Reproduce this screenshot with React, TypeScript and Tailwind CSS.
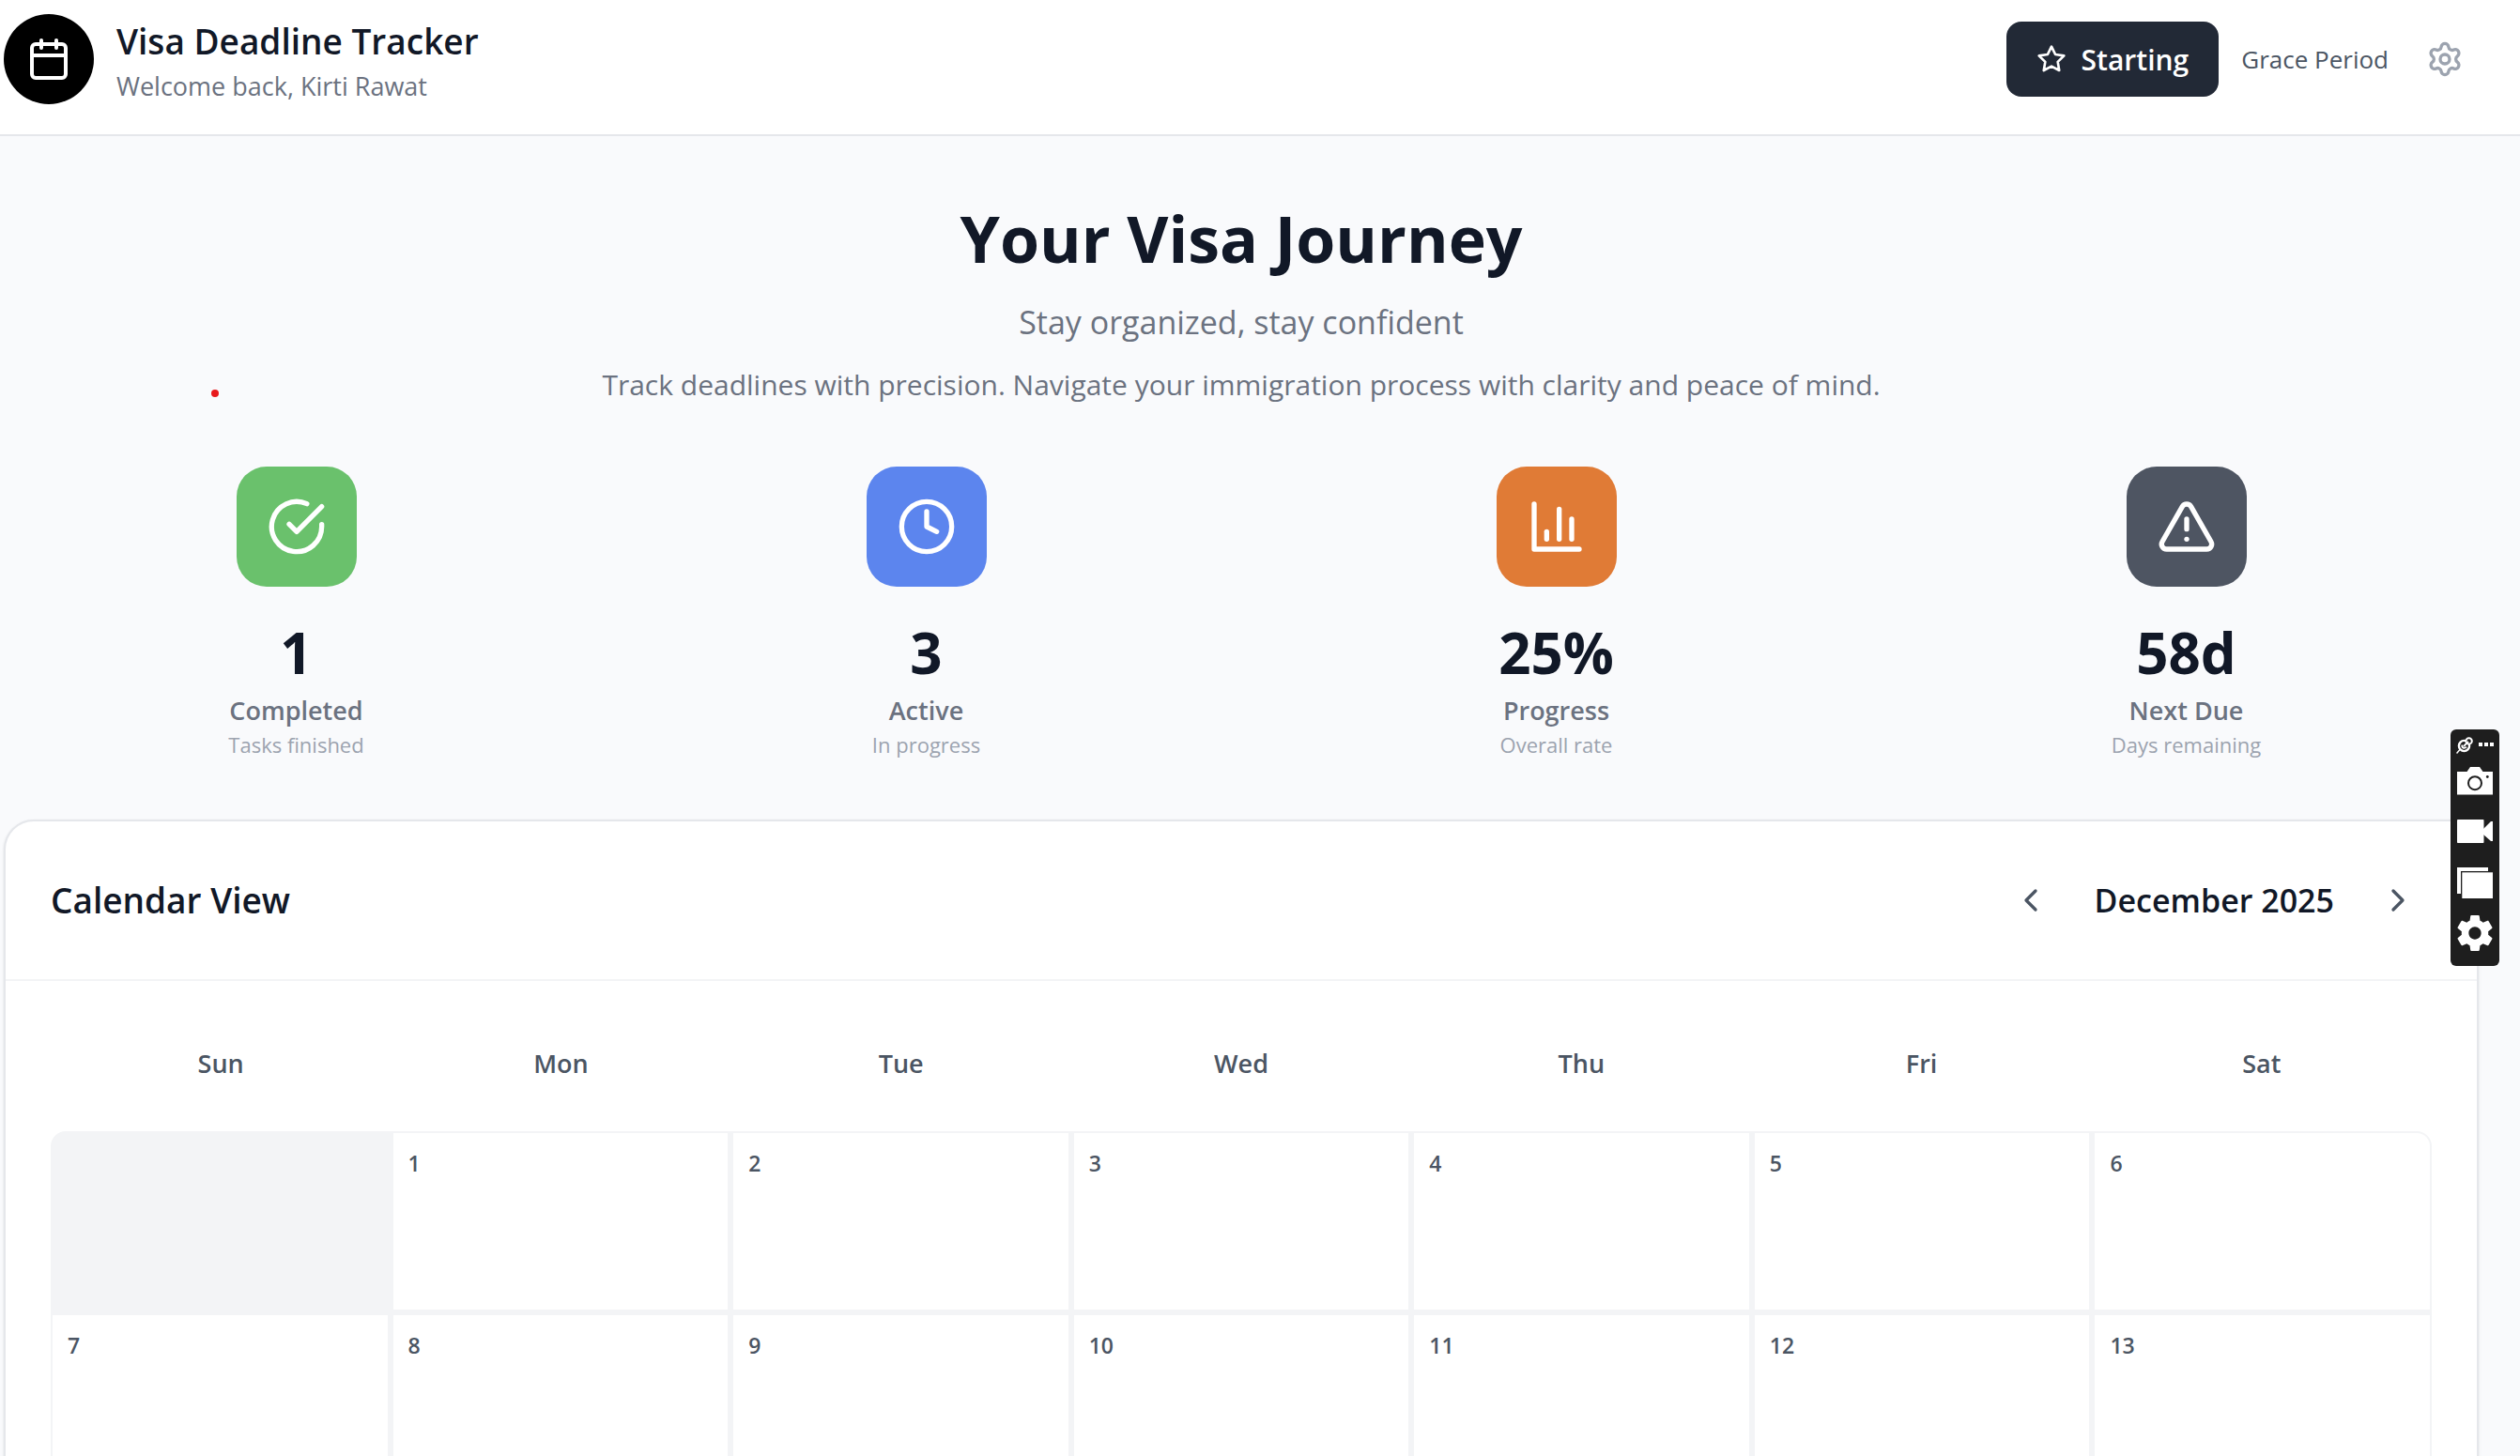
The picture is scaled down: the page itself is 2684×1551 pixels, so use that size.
import type { ReactNode } from "react";
import { Calendar, ChevronLeft, ChevronRight, Clock, Settings, TriangleAlert } from "lucide-react";

function StarIcon() {
  return (
    <svg className="size-8" viewBox="0 0 24 24" fill="none" stroke="currentColor" strokeWidth="2" strokeLinecap="round" strokeLinejoin="round" aria-hidden="true">
      <polygon points="12 2 15.09 8.26 22 9.27 17 14.14 18.18 21.02 12 17.77 5.82 21.02 7 14.14 2 9.27 8.91 8.26 12 2" />
    </svg>
  );
}

function CheckIcon() {
  return (
    <svg className="size-16" viewBox="0 0 24 24" fill="none" stroke="currentColor" strokeWidth="2" strokeLinecap="round" strokeLinejoin="round" aria-hidden="true">
      <path d="M22 11.08V12a10 10 0 1 1-5.93-9.14" />
      <path d="m9 11 3 3L22 4" />
    </svg>
  );
}

function BarsIcon() {
  return (
    <svg className="size-16" viewBox="0 0 24 24" fill="none" stroke="currentColor" strokeWidth="2" strokeLinecap="round" strokeLinejoin="round" aria-hidden="true">
      <path d="M3 3v18h18" />
      <path d="M18 17V9" />
      <path d="M13 17V5" />
      <path d="M8 17v-3" />
    </svg>
  );
}

type Stat = { icon: ReactNode; color: string; value: string; label: string; note: string };

const stats: Stat[] = [
  { icon: <CheckIcon />, color: "bg-[#6ac16c]", value: "1", label: "Completed", note: "Tasks finished" },
  { icon: <Clock className="size-16" />, color: "bg-[#5c85ee]", value: "3", label: "Active", note: "In progress" },
  { icon: <BarsIcon />, color: "bg-[#e07b36]", value: "25%", label: "Progress", note: "Overall rate" },
  { icon: <TriangleAlert className="size-16" />, color: "bg-[#4e5562]", value: "58d", label: "Next Due", note: "Days remaining" },
];

const weekdays = ["Sun", "Mon", "Tue", "Wed", "Thu", "Fri", "Sat"];
const days: (number | null)[] = [null, 1, 2, 3, 4, 5, 6, 7, 8, 9, 10, 11, 12, 13];

function Header() {
  return (
    <header className="flex shrink-0 items-center justify-between border-b-2 border-[#e5e7eb] bg-white pt-[15px] pr-11 pb-8 pl-1">
      <div className="flex items-center gap-6">
        <div className="flex size-24 items-center justify-center rounded-full bg-black text-white">
          <Calendar className="size-12" />
        </div>
        <div>
          <div className="text-[37px] leading-[58px] font-semibold text-[#111827]">Visa Deadline Tracker</div>
          <p className="text-[27px] leading-[38px] text-[#6b7280]">Welcome back, Kirti Rawat</p>
        </div>
      </div>
      <div className="flex items-center gap-6">
        <button type="button" className="flex h-20 items-center gap-4 rounded-2xl bg-[#222936] px-8 text-[30px] font-semibold text-white">
          <StarIcon />
          Starting
        </button>
        <span className="text-[26px] leading-10 text-[#4b5563]">Grace Period</span>
        <button type="button" aria-label="Settings" className="p-4 text-[#9ca3af]">
          <Settings className="size-10" />
        </button>
      </div>
    </header>
  );
}

function Hero() {
  return (
    <section className="text-center">
      <h1 className="text-[68px] leading-[90px] font-bold text-[#111827]">Your Visa Journey</h1>
      <p className="mt-4 text-[34px] leading-[56px] text-[#6b7280]">Stay organized, stay confident</p>
      <p className="mt-4 text-[30px] leading-[46px] text-[#6b7280]">
        Track deadlines with precision. Navigate your immigration process with clarity and peace of mind.
      </p>
    </section>
  );
}

function StatCard({ icon, color, value, label, note }: Stat) {
  return (
    <div className="flex flex-col items-center">
      <div className={`flex size-32 items-center justify-center rounded-[32px] text-white ${color}`}>{icon}</div>
      <div className="mt-8 text-[60px] leading-[76px] font-bold text-[#111827]">{value}</div>
      <div className="mt-1 text-[27px] leading-10 font-semibold text-[#6b7280]">{label}</div>
      <div className="text-[22px] leading-8 text-[#9ca3af]">{note}</div>
    </div>
  );
}

function CalendarCard() {
  return (
    <section className="mt-16 rounded-[32px] border-2 border-[#e5e7eb] bg-white shadow-sm">
      <div className="flex items-center justify-between border-b-2 border-[#f3f4f6] p-12">
        <h2 className="text-[37px] leading-[56px] font-semibold text-[#111827]">Calendar View</h2>
        <div className="flex items-center gap-8">
          <button type="button" aria-label="Previous month" className="p-4 text-[#4b5563]">
            <ChevronLeft className="size-10" />
          </button>
          <span className="text-[34px] leading-[56px] font-semibold text-[#111827]">December 2025</span>
          <button type="button" aria-label="Next month" className="p-4 text-[#4b5563]">
            <ChevronRight className="size-10" />
          </button>
        </div>
      </div>
      <div className="p-12">
        <div className="mb-8 grid grid-cols-7">
          {weekdays.map((day) => (
            <div key={day} className="py-5 text-center text-[27px] leading-10 font-semibold text-[#4b5563]">
              {day}
            </div>
          ))}
        </div>
        <div className="grid grid-cols-7 gap-[6px] overflow-hidden rounded-2xl border-2 border-[#f3f4f6] bg-[#f3f4f6]">
          {days.map((day, i) =>
            day === null ? (
              <div key={i} className="h-[188px]" />
            ) : (
              <div key={i} className="h-[188px] bg-white p-4 text-[23px] leading-8 font-semibold text-[#4b5563]">
                {day}
              </div>
            ),
          )}
        </div>
      </div>
    </section>
  );
}

function CaptureToolbar() {
  return (
    <aside className="fixed top-[777px] right-[22px] w-[52px] rounded-md bg-[#1e1e1e] pb-2 text-white">
      <div className="flex h-7 items-end justify-between px-1.5 pb-0.5">
        <button type="button" aria-label="Pin toolbar">
          <svg className="size-[18px]" viewBox="0 0 18 18" fill="none" stroke="currentColor" aria-hidden="true">
            <path d="M0.5 17.5 4 13.5" strokeWidth="1.5" />
            <circle cx="8.5" cy="9.5" r="5.6" strokeWidth="2.4" />
            <circle cx="13.6" cy="4.4" r="3.2" fill="#1e1e1e" strokeWidth="2" />
            <path d="M6.5 8.5c-1 3 2.2 4.5 4.5 2.2M8 10 13 5" strokeWidth="1.8" />
          </svg>
        </button>
        <button type="button" aria-label="More options" className="pb-2">
          <svg className="h-1 w-4" viewBox="0 0 16 4" fill="currentColor" aria-hidden="true">
            <path d="M0 0h4v4H0zM6 0h4v4H6zM12 0h4v4h-4z" />
          </svg>
        </button>
      </div>
      <button type="button" aria-label="Take screenshot" className="flex h-[54px] w-full items-center justify-center">
        <svg className="h-[30px] w-[38px]" viewBox="0 0 38 30" aria-hidden="true">
          <path d="M0 5h10.5L14 0h10l3.500 5H38v24.500H0z" fill="currentColor" />
          <circle cx="19" cy="17.2" r="7" fill="none" stroke="#1e1e1e" strokeWidth="2" />
          <circle cx="32.3" cy="10.5" r="1.4" fill="#1e1e1e" />
        </svg>
      </button>
      <button type="button" aria-label="Record video" className="flex h-[54px] w-full items-center justify-center">
        <svg className="h-[26px] w-[38px]" viewBox="0 0 38 26" fill="currentColor" aria-hidden="true">
          <rect width="28.5" height="25" rx="0.8" />
          <path d="M28 10 36 2h2v21h-2l-8-7z" />
        </svg>
      </button>
      <button type="button" aria-label="Open gallery" className="flex h-[54px] w-full items-center justify-center">
        <svg className="h-[33px] w-[38px]" viewBox="0 0 38 33" fill="currentColor" aria-hidden="true">
          <path d="M0 0h33v4H4v24H0z" />
          <rect x="5.3" y="5.3" width="32.7" height="27.7" />
        </svg>
      </button>
      <button type="button" aria-label="Toolbar settings" className="flex h-[54px] w-full items-center justify-center">
        <svg className="size-[38px]" viewBox="2 2 20 20" fill="currentColor" aria-hidden="true">
          <path d="M19.43 12.98c.04-.32.07-.64.07-.98s-.03-.66-.07-.98l2.11-1.65c.19-.15.24-.42.12-.64l-2-3.46c-.12-.22-.39-.3-.61-.22l-2.49 1c-.52-.4-1.08-.73-1.69-.98l-.38-2.65C14.46 2.18 14.25 2 14 2h-4c-.25 0-.46.18-.49.42l-.38 2.65c-.61.25-1.17.59-1.69.98l-2.49-1c-.23-.09-.49 0-.61.22l-2 3.46c-.13.22-.07.49.12.64l2.11 1.65c-.04.32-.07.65-.07.98s.03.66.07.98l-2.11 1.65c-.19.15-.24.42-.12.64l2 3.46c.12.22.39.3.61.22l2.49-1c.52.4 1.08.73 1.69.98l.38 2.65c.03.24.24.42.49.42h4c.25 0 .46-.18.49-.42l.38-2.65c.61-.25 1.17-.59 1.69-.98l2.49 1c.23.09.49 0 .61-.22l2-3.46c.12-.22.07-.49-.12-.64l-2.11-1.65zM12 15.5c-1.93 0-3.5-1.57-3.5-3.5s1.57-3.5 3.5-3.5 3.5 1.57 3.5 3.5-1.57 3.5-3.5 3.5z" />
        </svg>
      </button>
    </aside>
  );
}

export default function App() {
  return (
    <div className="flex h-screen flex-col overflow-hidden bg-[#f9fafc] font-['Open_Sans',sans-serif]">
      <Header />
      <main className="min-h-0 flex-1 pt-16 pr-11 pl-1">
        <Hero />
        <section className="mt-16 grid grid-cols-4 gap-12">
          {stats.map((stat) => (
            <StatCard key={stat.label} {...stat} />
          ))}
        </section>
        <CalendarCard />
      </main>
      <span className="fixed top-[415px] left-[225px] size-2 rounded-full bg-[#e8191c]" />
      <CaptureToolbar />
    </div>
  );
}
